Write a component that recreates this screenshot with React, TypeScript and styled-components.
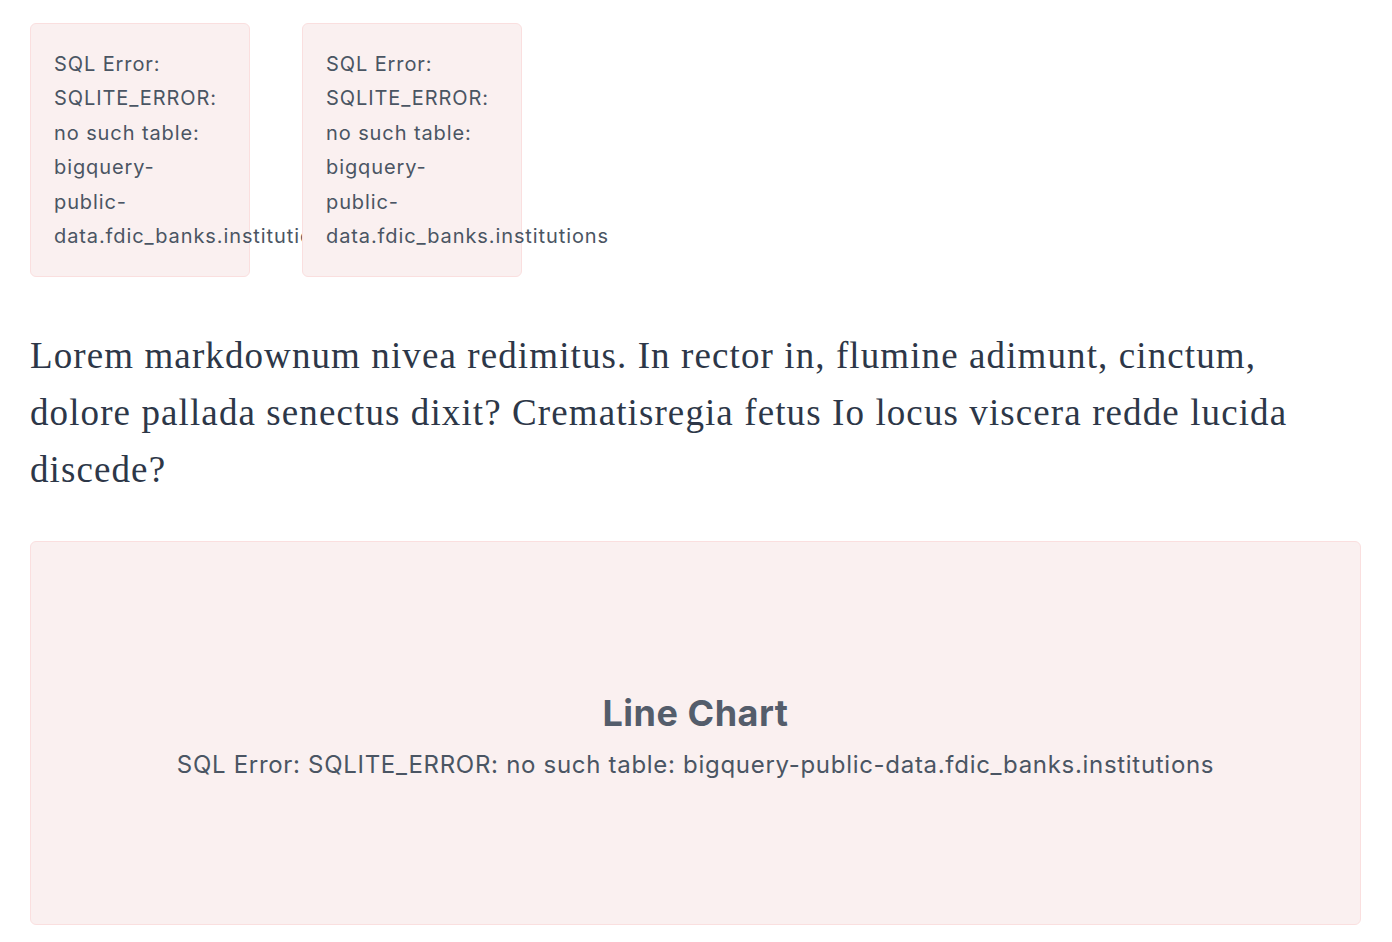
import React from 'react'
import styled, { createGlobalStyle } from 'styled-components'

const errorText = 'SQL Error: SQLITE_ERROR: no such table: bigquery-public-data.fdic_banks.institutions'

const GlobalStyle = createGlobalStyle`
    html, body {
        margin: 0;
        padding: 0;
        background: #ffffff;
    }
`

const Page = styled.main`
    padding: 23px 31px 0 30px;
    display: flex;
    flex-direction: column;
`

const CardRow = styled.div`
    display: flex;
    gap: 52px;
`

const ErrorCard = styled.div`
    box-sizing: border-box;
    width: 220px;
    padding: 22.5px 23px;
    background: #faf0f0;
    border: 1px solid #fadfdf;
    border-radius: 6px;
    font-family: Inter, "Liberation Sans", sans-serif;
    font-size: 20px;
    letter-spacing: 0.9px;
    line-height: 34.5px;
    color: #4a5563;
`

const Paragraph = styled.p`
    margin: 50px 0 43px;
    font-family: "Liberation Serif", serif;
    font-size: 37px;
    letter-spacing: 1.1px;
    line-height: 57px;
    color: #2d3748;
`

const ChartBox = styled.div`
    box-sizing: border-box;
    height: 384px;
    padding-top: 5px;
    display: flex;
    flex-direction: column;
    align-items: center;
    justify-content: center;
    background: #faf0f0;
    border: 1px solid #fadfdf;
    border-radius: 6px;
    font-family: Inter, "Liberation Sans", sans-serif;
    color: #4a5563;
`

const ChartTitle = styled.div`
    font-size: 36px;
    font-weight: 700;
    letter-spacing: 0.5px;
    line-height: 44px;
    color: #545d6b;
`

const ChartMessage = styled.div`
    margin-top: 15px;
    font-size: 24px;
    letter-spacing: 0.7px;
    line-height: 30px;
`

export default function App() {
    return (
        <>
            <GlobalStyle />
            <Page>
                <CardRow>
                    <ErrorCard>{errorText}</ErrorCard>
                    <ErrorCard>{errorText}</ErrorCard>
                </CardRow>
                <Paragraph>
                    Lorem markdownum nivea redimitus. In rector in, flumine adimunt, cinctum, dolore pallada
                    senectus dixit? Crematisregia fetus Io locus viscera redde lucida discede?
                </Paragraph>
                <ChartBox>
                    <ChartTitle>Line Chart</ChartTitle>
                    <ChartMessage>{errorText}</ChartMessage>
                </ChartBox>
            </Page>
        </>
    )
}
